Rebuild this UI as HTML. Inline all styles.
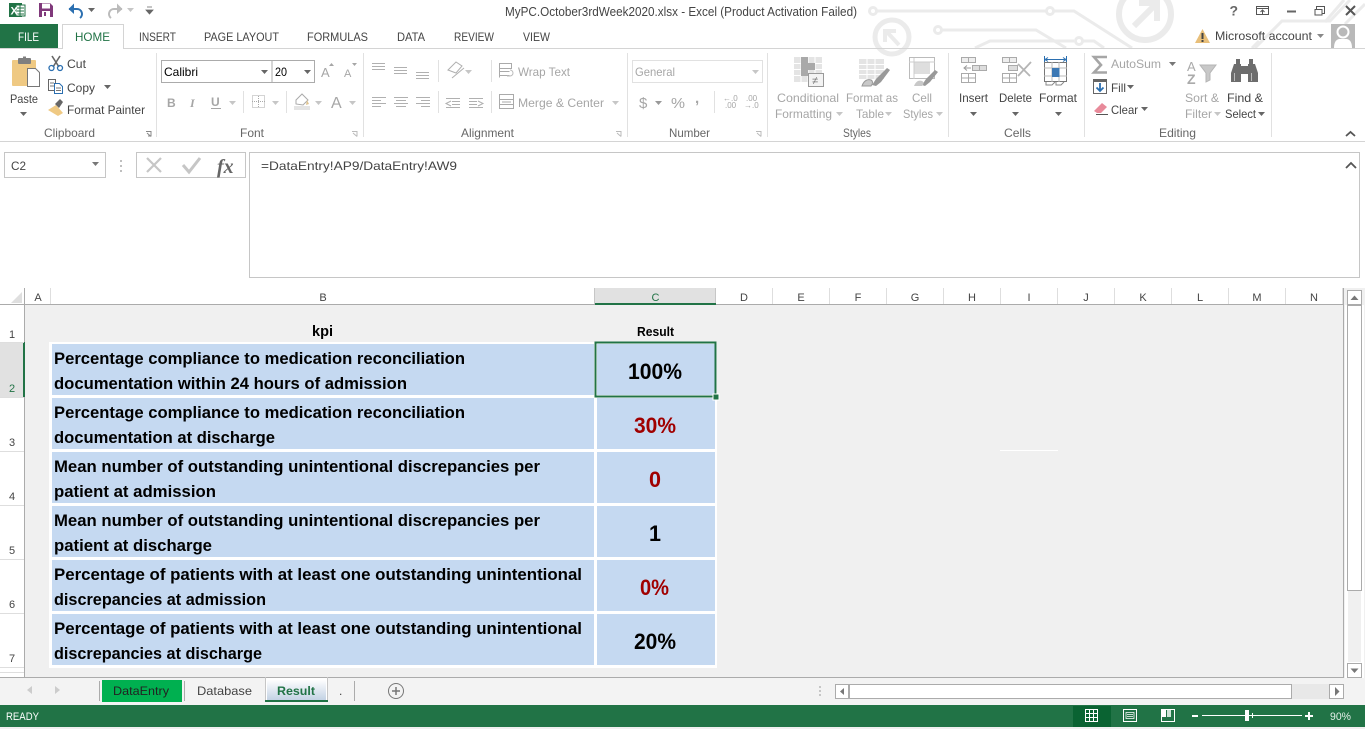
<!DOCTYPE html>
<html><head><meta charset="utf-8"><title>Excel</title>
<style>
html,body{margin:0;padding:0;background:#fff;overflow:hidden;width:1365px;height:729px}
svg{display:block}
text{font-family:"Liberation Sans",sans-serif;font-size:12px;fill:#444;white-space:pre}
.d text,text.d{fill:#a6a6a6}
.g{font-size:12px;fill:#666}
.h{font-size:11px;fill:#444}
.b{font-weight:bold;font-size:17px;fill:#000}
.v{font-weight:bold;font-size:22px;fill:#000}
.r{fill:#a00000}
</style></head><body>
<svg width="1365" height="729" viewBox="0 0 1365 729" xmlns="http://www.w3.org/2000/svg">
<defs>
<path id="car" d="M0 0h7l-3.500 4z"/>
<linearGradient id="tabg" x1="0" y1="0" x2="0" y2="1"><stop offset="0" stop-color="#fdfdfe"/><stop offset="1" stop-color="#c3d2e4"/></linearGradient>
</defs>
<rect width="1365" height="729" fill="#fff"/>

<!-- title bar circuit bg -->
<g fill="none" stroke="#ebebeb" stroke-width="3">
<circle cx="873" cy="11" r="3.500"/><path d="M877 11H1046"/><circle cx="1050" cy="11" r="3.500"/><path d="M1054 11H1074L1132 48"/>
<circle cx="938" cy="30" r="3.500"/><path d="M942 30H1036L1066 48"/>
<path d="M975 48L990 41H1074"/><circle cx="1079" cy="41" r="3.500"/><path d="M1083 41H1094L1104 48"/>
<circle cx="892" cy="37" r="17" stroke-width="5"/><path d="M887 32L899 45M885 42V31H896" stroke-width="4"/>
<circle cx="1145" cy="14" r="26" stroke-width="6"/><path d="M1134 26L1155 5M1139 3H1157V21" stroke-width="6"/>
<path d="M1252 48L1259 41"/><path d="M1255 48L1282 21H1330L1350 0"/><path d="M1325 22L1344 0"/><path d="M1345 24L1365 4"/>
</g>

<!-- Quick access -->
<rect x="9" y="3" width="13" height="14" fill="#217346"/><rect x="16" y="5" width="9" height="11" fill="#fff" stroke="#217346"/>
<path d="M17 8h7M17 11h7M17 14h7M20 5v11" stroke="#217346" stroke-width="1"/>
<text x="10.500" y="14.500" style="font-size:11px;font-weight:bold;fill:#fff">X</text>
<path d="M39 3h11l3 3v11H39z" fill="#80397b"/><rect x="42" y="3.500" width="8" height="5" fill="#fff"/><rect x="42" y="11" width="8" height="6" fill="#fff"/><rect x="44" y="12" width="2" height="4" fill="#80397b"/>
<path d="M69 9h8a5 5 0 0 1 3 9" fill="none" stroke="#2b6fb0" stroke-width="2"/><path d="M74 3.500l-5.500 5.500 5.500 5z" fill="#2b6fb0"/>
<use href="#car" x="88" y="8" fill="#666"/>
<path d="M122 9h-8a5 5 0 0 0-3 9" fill="none" stroke="#bbb" stroke-width="2"/><path d="M117 3.500l5.500 5.500-5.500 5z" fill="#bbb"/>
<use href="#car" x="127" y="8" fill="#c6c6c6"/>
<path d="M147 7h5M146 10h7l-3.500 4z" stroke="#666" fill="#666" stroke-width=".8"/>

<text x="505" y="16" textLength="352" lengthAdjust="spacingAndGlyphs" style="font-size:12.500px">MyPC.October3rdWeek2020.xlsx - Excel (Product Activation Failed)</text>

<!-- window controls -->
<text x="1229.500" y="15.500" style="font-size:14px;font-weight:bold;fill:#666">?</text>
<rect x="1256.500" y="6.500" width="12" height="8" fill="none" stroke="#555"/><path d="M1257 8.500h11M1262.500 14V10M1260.500 12l2-2 2 2" fill="none" stroke="#555"/>
<rect x="1287" y="10.500" width="9" height="2" fill="#666"/>
<path d="M1316.500 9.500v-3h8v7h-3M1316 9.500h6v5.500h-7v-5.500z" fill="none" stroke="#555"/>
<path d="M1346 6l9 9M1355 6l-9 9" stroke="#555" stroke-width="2"/>

<!-- tabs -->
<rect x="0" y="24" width="58" height="24" fill="#217346"/>
<text x="18" y="41" textLength="21" lengthAdjust="spacingAndGlyphs" style="fill:#fff">FILE</text>
<path d="M0 48.500H62.500V24.500H123.500V48.500H1365" fill="#fff" stroke="#d4d4d4"/>
<text x="75" y="41" textLength="35" lengthAdjust="spacingAndGlyphs" style="fill:#217346">HOME</text>
<text x="139" y="41" textLength="37" lengthAdjust="spacingAndGlyphs">INSERT</text>
<text x="204" y="41" textLength="75" lengthAdjust="spacingAndGlyphs">PAGE LAYOUT</text>
<text x="307" y="41" textLength="61" lengthAdjust="spacingAndGlyphs">FORMULAS</text>
<text x="397" y="41" textLength="28" lengthAdjust="spacingAndGlyphs">DATA</text>
<text x="454" y="41" textLength="40" lengthAdjust="spacingAndGlyphs">REVIEW</text>
<text x="523" y="41" textLength="27" lengthAdjust="spacingAndGlyphs">VIEW</text>

<path d="M1195 43l7.500-14 7.500 14z" fill="#e8bf7a"/><rect x="1201.500" y="33" width="2" height="6" fill="#444"/><rect x="1201.500" y="40" width="2" height="2" fill="#444"/>
<text x="1215" y="40" textLength="97" lengthAdjust="spacingAndGlyphs">Microsoft account</text>
<use href="#car" x="1317" y="34" fill="#888"/>
<rect x="1331" y="24" width="24" height="24" fill="#b9b9b9"/><circle cx="1343" cy="32" r="5.500" fill="none" stroke="#fff" stroke-width="2"/><path d="M1334 48c0-8 4-9 6-9h6c2 0 6 1 6 9z" fill="#fff"/>

<!-- ribbon bottom + separators -->
<rect x="0" y="141" width="1365" height="1" fill="#d4d4d4"/>
<g fill="#e1e1e1">
<rect x="156" y="53" width="1" height="84"/><rect x="363" y="53" width="1" height="84"/><rect x="627" y="53" width="1" height="84"/><rect x="767" y="53" width="1" height="84"/><rect x="948" y="53" width="1" height="84"/><rect x="1084" y="53" width="1" height="84"/><rect x="1271" y="53" width="1" height="84"/>
<rect x="243" y="91" width="1" height="22"/><rect x="286" y="91" width="1" height="22"/><rect x="438" y="60" width="1" height="22"/><rect x="438" y="91" width="1" height="22"/><rect x="491" y="60" width="1" height="22"/><rect x="491" y="91" width="1" height="22"/><rect x="714" y="91" width="1" height="22"/>
</g>

<!-- Clipboard -->
<rect x="12" y="60" width="24" height="26" rx="1" fill="#efc983"/><rect x="18" y="58" width="13" height="6" rx="1" fill="#7f7f7f"/><rect x="23" y="56.500" width="3" height="3" fill="#7f7f7f"/>
<path d="M27.500 68.500h8l4 4v14h-12z" fill="#fff" stroke="#777"/>
<text x="10" y="103" textLength="28" lengthAdjust="spacingAndGlyphs">Paste</text>
<use href="#car" x="20" y="112" fill="#666"/>
<path d="M52 56l7 11M60 56l-7 11" stroke="#666" stroke-width="1.600"/><circle cx="51.500" cy="68" r="2.500" fill="none" stroke="#2b6fb0" stroke-width="1.300"/><circle cx="60" cy="68" r="2.500" fill="none" stroke="#2b6fb0" stroke-width="1.300"/>
<text x="67" y="68" textLength="19" lengthAdjust="spacingAndGlyphs">Cut</text>
<path d="M48.500 79.500h7v11h-7z" fill="#fff" stroke="#666"/><path d="M54.500 83.500h5l3 3v7h-8z" fill="#fff" stroke="#2b6fb0"/><path d="M56 88h5M56 90.500h5M50 83h4M50 86h4" stroke="#777"/>
<text x="67" y="92" textLength="28" lengthAdjust="spacingAndGlyphs">Copy</text>
<use href="#car" x="104" y="85" fill="#666"/>
<path d="M48 110l8-5 7 8-5 3z" fill="#efc983"/><path d="M55 104l5-5 3 3-4 6z" fill="#666"/>
<text x="67" y="114" textLength="78" lengthAdjust="spacingAndGlyphs">Format Painter</text>
<text x="44" y="137" class="g" textLength="51" lengthAdjust="spacingAndGlyphs">Clipboard</text>
<path d="M146 131.500h5v5M147 133l4 3.500M148 136h3" fill="none" stroke="#888"/>

<!-- Font -->
<rect x="161.500" y="60.500" width="153" height="22" fill="#fff" stroke="#ababab"/><path d="M272 60v23" stroke="#ababab"/>
<text x="164" y="76" textLength="34" lengthAdjust="spacingAndGlyphs" style="fill:#000">Calibri</text>
<use href="#car" x="261" y="70" fill="#666"/>
<text x="275" y="76" textLength="12" lengthAdjust="spacingAndGlyphs" style="fill:#000">20</text>
<use href="#car" x="304" y="70" fill="#666"/>
<g class="d">
<text x="321" y="77" style="font-size:13px">A</text><path d="M329 66l2.500-3 2.500 3z" fill="#a6a6a6"/>
<text x="344" y="77" style="font-size:11px">A</text><path d="M352 63l2.500 3 2.500-3z" fill="#a6a6a6"/>
<text x="167" y="107" style="font-size:12px;font-weight:bold">B</text>
<text x="190" y="107" style="font-size:12px;font-style:italic;font-family:'Liberation Serif',serif;font-weight:bold">I</text>
<text x="211" y="106" style="font-size:12px;font-weight:bold">U</text><rect x="211" y="108" width="10" height="1" fill="#a6a6a6"/>
</g>
<use href="#car" x="229" y="101" fill="#c6c6c6"/>
<rect x="252.500" y="95.500" width="12" height="12" fill="none" stroke="#aaa" stroke-dasharray="1 1"/><path d="M258.500 96v12M252 101.500h13" stroke="#aaa" stroke-dasharray="1 1"/>
<use href="#car" x="272" y="101" fill="#c6c6c6"/>
<path d="M296 100l6-6 6 6-5 5-7-1z" fill="#fff" stroke="#aaa"/><path d="M307 100l2 4-3 1z" fill="#e0c48f"/><rect x="294" y="106" width="16" height="4" fill="#e4e4e4"/>
<use href="#car" x="315" y="101" fill="#c6c6c6"/>
<text x="331" y="108" style="font-size:16px;fill:#a6a6a6">A</text>
<use href="#car" x="349" y="101" fill="#c6c6c6"/>
<text x="240" y="137" class="g" textLength="24" lengthAdjust="spacingAndGlyphs">Font</text>
<path d="M352 131.500h5v5M353 133l4 3.500" fill="none" stroke="#bbb"/>

<!-- Alignment -->
<g stroke="#b0b0b0" fill="none">
<path d="M372 63.500h13M372 66.500h13M372 69.500h13"/>
<path d="M394 67.500h13M394 70.500h13M394 73.500h13"/>
<path d="M416 72.500h13M416 75.500h13M416 78.500h13"/>
<path d="M372 97.500h14M372 100.500h9M372 103.500h14M372 106.500h9"/>
<path d="M394 97.500h14M396 100.500h10M394 103.500h14M396 106.500h10"/>
<path d="M416 97.500h14M421 100.500h9M416 103.500h14M421 106.500h9"/>
<path d="M446 98.500h14M452 101.500h8M452 104.500h8M446 107.500h14M451 101l-5 2.500 5 2.500"/>
<path d="M469 98.500h14M469 101.500h8M469 104.500h8M469 107.500h14M478 101l5 2.500-5 2.500"/>
<path d="M448 70l8-8 6 4-6 7zM452 78l12-10"/>
</g>
<use href="#car" x="465" y="70" fill="#c6c6c6"/>
<path d="M499.500 63.500h12v5h-12zM499.500 71.500h10M499.500 75.500h10M499.500 68.500v9" fill="none" stroke="#aaa"/><path d="M510 70a3 3 0 0 1 0 6h-3" fill="none" stroke="#bbb"/>
<text x="518" y="76" class="d" textLength="52" lengthAdjust="spacingAndGlyphs">Wrap Text</text>
<rect x="499.500" y="94.500" width="14" height="14" fill="#fff" stroke="#aaa"/><path d="M500 99.500h13M500 104.500h13M502 102h9" stroke="#aaa"/>
<text x="518" y="107" class="d" textLength="86" lengthAdjust="spacingAndGlyphs">Merge &amp; Center</text>
<use href="#car" x="612" y="101" fill="#c6c6c6"/>
<text x="461" y="137" class="g" textLength="53" lengthAdjust="spacingAndGlyphs">Alignment</text>
<path d="M616 131.500h5v5M617 133l4 3.500" fill="none" stroke="#bbb"/>

<!-- Number -->
<rect x="632.500" y="60.500" width="130" height="22" fill="#fff" stroke="#e1e1e1"/>
<text x="635" y="76" class="d" textLength="40" lengthAdjust="spacingAndGlyphs">General</text>
<use href="#car" x="752" y="70" fill="#c6c6c6"/>
<text x="639" y="108" style="font-size:15px;fill:#a6a6a6">$</text>
<use href="#car" x="655" y="101" fill="#999"/>
<text x="671" y="108" style="font-size:15px;fill:#a6a6a6" textLength="14" lengthAdjust="spacingAndGlyphs">%</text>
<text x="695" y="103" style="font-size:15px;font-weight:bold;fill:#a6a6a6">,</text>
<text x="723" y="101" style="font-size:8px;fill:#a6a6a6">←.0</text><text x="725" y="108" style="font-size:8px;fill:#a6a6a6">.00</text>
<text x="746" y="101" style="font-size:8px;fill:#a6a6a6">.00</text><text x="744" y="108" style="font-size:8px;fill:#a6a6a6">→.0</text>
<text x="669" y="137" class="g" textLength="41" lengthAdjust="spacingAndGlyphs">Number</text>
<path d="M756 131.500h5v5M757 133l4 3.500" fill="none" stroke="#bbb"/>

<!-- Styles -->
<rect x="794" y="57" width="28" height="25" fill="#e4e4e4"/><path d="M794 63.500h28M794 69.500h28M794 75.500h28M801 57v25M808 57v25M815 57v25" stroke="#fff"/><path d="M801 57h7v6h7v7h-7v6h-7z" fill="#a9a9a9"/>
<rect x="808.500" y="73.500" width="15" height="13" fill="#f3f3f3" stroke="#999"/><text x="812" y="84" style="font-size:11px;fill:#777">≠</text>
<text x="777" y="102" class="d" textLength="62" lengthAdjust="spacingAndGlyphs">Conditional</text>
<text x="775" y="118" class="d" textLength="57" lengthAdjust="spacingAndGlyphs">Formatting</text><use href="#car" x="836" y="112" fill="#c6c6c6"/>
<rect x="859" y="59" width="25" height="20" fill="#e4e4e4"/><path d="M859 64.500h25M859 69.500h25M859 74.500h25M867 59v20M875 59v20" stroke="#fff"/><path d="M872 85l4-6 11-11 3 2-9 12-5 4z" fill="#999"/><path d="M862 86c2-6 6-7 9-6 2 1 2 4 0 6z" fill="#c8c8c8" stroke="#999"/>
<text x="846" y="102" class="d" textLength="52" lengthAdjust="spacingAndGlyphs">Format as</text>
<text x="856" y="118" class="d" textLength="28" lengthAdjust="spacingAndGlyphs">Table</text><use href="#car" x="885" y="112" fill="#c6c6c6"/>
<rect x="909.500" y="57.500" width="25" height="21" fill="#fff" stroke="#bbb"/><rect x="914" y="62" width="16" height="12" fill="#dedede"/><path d="M909 62h26M914 58v21" stroke="#ccc"/><path d="M922 85l4-6 9-9 3 2-8 10-5 4z" fill="#999"/><path d="M914 86c2-5 5-6 8-5 2 1 2 3 0 5z" fill="#c8c8c8"/>
<text x="912" y="102" class="d" textLength="20" lengthAdjust="spacingAndGlyphs">Cell</text>
<text x="903" y="118" class="d" textLength="30" lengthAdjust="spacingAndGlyphs">Styles</text><use href="#car" x="936" y="112" fill="#c6c6c6"/>
<text x="843" y="137" class="g" textLength="28" lengthAdjust="spacingAndGlyphs">Styles</text>

<!-- Cells -->
<g fill="#fff" stroke="#aaa">
<rect x="961.500" y="57.500" width="14" height="5" fill="#eee"/><path d="M968.500 57v5"/>
<rect x="972.500" y="65.500" width="14" height="5" fill="#ddd"/><path d="M979.500 65v5"/>
<rect x="961.500" y="73.500" width="14" height="9"/><path d="M961 78h15M968.500 73v9"/>
<rect x="1002.500" y="57.500" width="14" height="5" fill="#eee"/><path d="M1009.500 57v5"/>
<rect x="1008.500" y="65.500" width="9" height="5" fill="#ddd"/>
<rect x="1002.500" y="73.500" width="14" height="9"/><path d="M1002 78h15M1009.500 73v9"/>
</g>
<path d="M971 68h-6M967 65.500l-3 2.500 3 2.500" fill="none" stroke="#999"/>
<path d="M1018 64l12 12M1031 62l-13 14" stroke="#b5b5b5" stroke-width="1.800"/>
<path d="M1044.500 56v7M1066.500 56v7M1046 59.500h19M1048 57.500l-3 2 3 2M1063 57.500l3 2-3 2" fill="none" stroke="#2b6fb0"/>
<rect x="1044.500" y="62.500" width="22" height="19" fill="#fff" stroke="#777"/><path d="M1044 68h23M1044 76h23M1052 62v20M1059 62v20" stroke="#bbb"/><rect x="1052" y="68" width="7.500" height="9" fill="#3c78b4"/>
<path d="M1046 82v3h6l3-3M1056 82v3h5l3-3" fill="none" stroke="#888"/>
<text x="959" y="102" textLength="29" lengthAdjust="spacingAndGlyphs">Insert</text><use href="#car" x="970" y="112" fill="#666"/>
<text x="999" y="102" textLength="33" lengthAdjust="spacingAndGlyphs">Delete</text><use href="#car" x="1012" y="112" fill="#666"/>
<text x="1039" y="102" textLength="38" lengthAdjust="spacingAndGlyphs">Format</text><use href="#car" x="1055" y="112" fill="#666"/>
<text x="1004" y="137" class="g" textLength="27" lengthAdjust="spacingAndGlyphs">Cells</text>

<!-- Editing -->
<path d="M1107 57H1094L1101 65L1094 72.500H1107" fill="none" stroke="#a6a6a6" stroke-width="2.600"/>
<text x="1111" y="68" class="d" textLength="50" lengthAdjust="spacingAndGlyphs">AutoSum</text><use href="#car" x="1169" y="62" fill="#777"/>
<rect x="1093.500" y="79.500" width="13" height="14" fill="#fff" stroke="#666"/><rect x="1093" y="79" width="14" height="3" fill="#666"/><path d="M1100 83v8M1096.500 87.500l3.500 3.500 3.500-3.500" fill="none" stroke="#2b6fb0" stroke-width="1.800"/>
<text x="1111" y="92" textLength="15" lengthAdjust="spacingAndGlyphs">Fill</text><use href="#car" x="1127" y="85" fill="#666"/>
<path d="M1094 111l8-8 5 4-6 6h-4z" fill="#e88a9a"/><rect x="1096" y="114" width="12" height="1" fill="#555"/>
<text x="1111" y="114" textLength="27" lengthAdjust="spacingAndGlyphs">Clear</text><use href="#car" x="1141" y="107" fill="#666"/>
<text x="1187" y="71" style="font-size:13px;fill:#aaa">A</text><text x="1187" y="84" style="font-size:14px;font-weight:bold;fill:#aaa">Z</text>
<path d="M1200 65h16l-6 8v7l-4 2v-9z" fill="#c8c8c8" stroke="#b5b5b5"/>
<text x="1185" y="102" class="d" textLength="34" lengthAdjust="spacingAndGlyphs">Sort &amp;</text>
<text x="1185" y="118" class="d" textLength="27" lengthAdjust="spacingAndGlyphs">Filter</text><use href="#car" x="1214" y="112" fill="#c6c6c6"/>
<path d="M1236 59h4v5h1v18h-10v-9l3-9h2zM1249 59h4v5h2l3 9v9h-10V64h1z" fill="#6d6d6d"/><rect x="1241" y="66" width="7" height="8" fill="#6d6d6d"/><path d="M1234.500 73v8M1251.500 73v8" stroke="#bbb"/>
<text x="1227" y="102" textLength="36" lengthAdjust="spacingAndGlyphs">Find &amp;</text>
<text x="1225" y="118" textLength="31" lengthAdjust="spacingAndGlyphs">Select</text><use href="#car" x="1258" y="112" fill="#666"/>
<text x="1159" y="137" class="g" textLength="37" lengthAdjust="spacingAndGlyphs">Editing</text>
<path d="M1346 136l4.500-4 4.500 4" fill="none" stroke="#555" stroke-width="1.800"/>

<!-- Formula bar -->
<rect x="4.500" y="152.500" width="101" height="25" fill="#fff" stroke="#c6c6c6"/>
<text x="11" y="170" textLength="15" lengthAdjust="spacingAndGlyphs">C2</text>
<use href="#car" x="92" y="162" fill="#777"/>
<path d="M121 160v2M121 165v2M121 170v2" stroke="#aaa" stroke-width="1.500"/>
<rect x="136.500" y="152.500" width="109" height="25" fill="#fff" stroke="#c6c6c6"/>
<path d="M147 158l14 14M161 158l-14 14" stroke="#c6c6c6" stroke-width="2.200"/>
<path d="M183 165l6 7 11-14" fill="none" stroke="#c6c6c6" stroke-width="3"/>
<text x="217" y="173" style="font-family:'Liberation Serif',serif;font-style:italic;font-weight:bold;font-size:20px;fill:#666">fx</text>
<rect x="249.500" y="152.500" width="1110" height="125" fill="#fff" stroke="#c6c6c6"/>
<text x="261" y="170" textLength="196" lengthAdjust="spacingAndGlyphs">=DataEntry!AP9/DataEntry!AW9</text>
<path d="M1346 168l5-5 5 5" fill="none" stroke="#555" stroke-width="1.800"/>

<!-- Sheet -->
<rect x="25" y="305" width="1318" height="372" fill="#f0f0f0"/>
<rect x="0" y="304" width="1343" height="1" fill="#ababab"/>
<rect x="24" y="288" width="1" height="390" fill="#ababab"/>
<rect x="1343" y="288" width="1" height="390" fill="#ababab"/>
<path d="M11 303L22 292V303z" fill="#dfdfdf"/>

<!-- col headers -->
<rect x="595" y="288" width="121" height="16" fill="#e1e1e1"/>
<rect x="595" y="303" width="121" height="2" fill="#217346"/>
<g fill="#dedede">
<rect x="50" y="288" width="1" height="16"/><rect x="594" y="288" width="1" height="16" fill="#c6c6c6"/><rect x="715" y="288" width="1" height="15" fill="#c6c6c6"/><rect x="772" y="288" width="1" height="16"/><rect x="829" y="288" width="1" height="16"/><rect x="886" y="288" width="1" height="16"/><rect x="943" y="288" width="1" height="16"/><rect x="1000" y="288" width="1" height="16"/><rect x="1057" y="288" width="1" height="16"/><rect x="1114" y="288" width="1" height="16"/><rect x="1171" y="288" width="1" height="16"/><rect x="1228" y="288" width="1" height="16"/><rect x="1285" y="288" width="1" height="16"/><rect x="1342" y="288" width="1" height="16"/>
</g>
<text class="h" x="38" y="301" text-anchor="middle">A</text>
<text class="h" x="323" y="301" text-anchor="middle">B</text>
<text class="h" x="655.500" y="301" text-anchor="middle" style="fill:#217346">C</text>
<text class="h" x="744" y="301" text-anchor="middle">D</text>
<text class="h" x="801" y="301" text-anchor="middle">E</text>
<text class="h" x="858" y="301" text-anchor="middle">F</text>
<text class="h" x="915" y="301" text-anchor="middle">G</text>
<text class="h" x="972" y="301" text-anchor="middle">H</text>
<text class="h" x="1029" y="301" text-anchor="middle">I</text>
<text class="h" x="1086" y="301" text-anchor="middle">J</text>
<text class="h" x="1143" y="301" text-anchor="middle">K</text>
<text class="h" x="1200" y="301" text-anchor="middle">L</text>
<text class="h" x="1257" y="301" text-anchor="middle">M</text>
<text class="h" x="1314" y="301" text-anchor="middle">N</text>

<!-- row headers -->
<rect x="0" y="343" width="24" height="54" fill="#e1e1e1"/>
<rect x="23" y="342" width="2" height="55" fill="#217346"/>
<g fill="#dedede">
<rect x="0" y="342" width="24" height="1"/><rect x="0" y="397" width="24" height="1"/><rect x="0" y="451" width="24" height="1"/><rect x="0" y="505" width="24" height="1"/><rect x="0" y="559" width="24" height="1"/><rect x="0" y="613" width="24" height="1"/><rect x="0" y="667" width="24" height="1"/><rect x="0" y="672" width="24" height="1"/>
</g>
<text class="h" x="12" y="338" text-anchor="middle">1</text>
<text class="h" x="12" y="392" text-anchor="middle" style="fill:#217346">2</text>
<text class="h" x="12" y="446" text-anchor="middle">3</text>
<text class="h" x="12" y="500" text-anchor="middle">4</text>
<text class="h" x="12" y="554" text-anchor="middle">5</text>
<text class="h" x="12" y="608" text-anchor="middle">6</text>
<text class="h" x="12" y="662" text-anchor="middle">7</text>

<!-- table -->
<rect x="49" y="342" width="668" height="326" fill="#fff"/>
<g fill="#c5d9f1">
<rect x="52" y="344" width="542" height="51"/><rect x="597" y="344" width="118" height="51"/>
<rect x="52" y="398" width="542" height="51"/><rect x="597" y="398" width="118" height="51"/>
<rect x="52" y="452" width="542" height="51"/><rect x="597" y="452" width="118" height="51"/>
<rect x="52" y="506" width="542" height="51"/><rect x="597" y="506" width="118" height="51"/>
<rect x="52" y="560" width="542" height="51"/><rect x="597" y="560" width="118" height="51"/>
<rect x="52" y="614" width="542" height="51"/><rect x="597" y="614" width="118" height="51"/>
</g>
<rect x="595.500" y="342.500" width="120" height="54" fill="none" stroke="#217346" stroke-width="2"/>
<rect x="713" y="394" width="6" height="6" fill="#217346" stroke="#fff" stroke-width="1"/>

<text x="312" y="336" style="font-weight:bold;font-size:15px;fill:#000" textLength="21" lengthAdjust="spacingAndGlyphs">kpi</text>
<text x="637" y="336" style="font-weight:bold;font-size:12.500px;fill:#000" textLength="37" lengthAdjust="spacingAndGlyphs">Result</text>

<text class="b" x="54" y="364" textLength="411" lengthAdjust="spacingAndGlyphs">Percentage compliance to medication reconciliation</text>
<text class="b" x="54" y="389" textLength="353" lengthAdjust="spacingAndGlyphs">documentation within 24 hours of admission</text>
<text class="b" x="54" y="418" textLength="411" lengthAdjust="spacingAndGlyphs">Percentage compliance to medication reconciliation</text>
<text class="b" x="54" y="443" textLength="221" lengthAdjust="spacingAndGlyphs">documentation at discharge</text>
<text class="b" x="54" y="472" textLength="486" lengthAdjust="spacingAndGlyphs">Mean number of outstanding unintentional discrepancies per</text>
<text class="b" x="54" y="497" textLength="162" lengthAdjust="spacingAndGlyphs">patient at admission</text>
<text class="b" x="54" y="526" textLength="486" lengthAdjust="spacingAndGlyphs">Mean number of outstanding unintentional discrepancies per</text>
<text class="b" x="54" y="551" textLength="158" lengthAdjust="spacingAndGlyphs">patient at discharge</text>
<text class="b" x="54" y="580" textLength="528" lengthAdjust="spacingAndGlyphs">Percentage of patients with at least one outstanding unintentional</text>
<text class="b" x="54" y="605" textLength="212" lengthAdjust="spacingAndGlyphs">discrepancies at admission</text>
<text class="b" x="54" y="634" textLength="528" lengthAdjust="spacingAndGlyphs">Percentage of patients with at least one outstanding unintentional</text>
<text class="b" x="54" y="659" textLength="208" lengthAdjust="spacingAndGlyphs">discrepancies at discharge</text>

<text class="v" x="628" y="379" textLength="54" lengthAdjust="spacingAndGlyphs">100%</text>
<text class="v r" x="634" y="433" textLength="42" lengthAdjust="spacingAndGlyphs">30%</text>
<text class="v r" x="649" y="487" textLength="12" lengthAdjust="spacingAndGlyphs">0</text>
<text class="v" x="649" y="541" textLength="12" lengthAdjust="spacingAndGlyphs">1</text>
<text class="v r" x="640" y="595" textLength="29" lengthAdjust="spacingAndGlyphs">0%</text>
<text class="v" x="634" y="649" textLength="42" lengthAdjust="spacingAndGlyphs">20%</text>

<rect x="1000" y="450" width="58" height="1" fill="#fff"/>

<!-- V scrollbar -->
<rect x="1344" y="288" width="21" height="390" fill="#f0f0f0"/>
<rect x="1345" y="305" width="19" height="373" fill="#fff"/>
<rect x="1347.500" y="290.500" width="14" height="14" fill="#fff" stroke="#ababab"/>
<path d="M1350.500 300l4-4.500 4 4.500z" fill="#777"/>
<rect x="1347.500" y="305.500" width="14" height="285" fill="#fff" stroke="#ababab"/>
<rect x="1348" y="591" width="13" height="71" fill="#f0f0f0"/>
<rect x="1347.500" y="663.500" width="14" height="14" fill="#fff" stroke="#ababab"/>
<path d="M1350.500 668.500l4 4.500 4-4.500z" fill="#777"/>

<!-- sheet tabs row -->
<rect x="0" y="678" width="1365" height="27" fill="#f3f3f3"/>
<rect x="0" y="677" width="1344" height="1" fill="#ababab"/>
<path d="M32 686l-5 4 5 4zM55 686l5 4-5 4z" fill="#ccc"/>
<rect x="99" y="681" width="1" height="20" fill="#ababab"/>
<rect x="102" y="680" width="80" height="22" fill="#00b050"/>
<text x="113" y="695" textLength="56" lengthAdjust="spacingAndGlyphs" style="fill:#222">DataEntry</text>
<rect x="184" y="681" width="1" height="20" fill="#ababab"/>
<text x="197" y="695" textLength="55" lengthAdjust="spacingAndGlyphs">Database</text>
<rect x="265" y="678" width="63" height="23" fill="#fff"/>
<path d="M265.500 702V677M327.500 702V677" stroke="#c6c6c6"/>
<rect x="267" y="680" width="59" height="20" fill="url(#tabg)"/>
<rect x="265" y="700" width="63" height="2" fill="#217346"/>
<text x="277" y="695" textLength="38" lengthAdjust="spacingAndGlyphs" style="font-weight:bold;fill:#217346">Result</text>
<text x="339" y="695" style="fill:#444">.</text>
<rect x="354" y="681" width="1" height="20" fill="#ababab"/>
<circle cx="396" cy="691" r="7.500" fill="none" stroke="#777"/><path d="M396 687v8M392 691h8" stroke="#777" stroke-width="1.500"/>
<path d="M820 686v2M820 690v2M820 694v2" stroke="#999"/>

<!-- H scrollbar -->
<rect x="835" y="684" width="509" height="15" fill="#e8e8e8"/>
<rect x="835.500" y="684.500" width="13" height="14" fill="#fff" stroke="#ababab"/>
<path d="M844 688v7l-4-3.500z" fill="#777"/>
<rect x="849.500" y="684.500" width="442" height="14" fill="#fff" stroke="#ababab"/>
<rect x="1329.500" y="684.500" width="14" height="14" fill="#fff" stroke="#ababab"/>
<path d="M1335 687v9l4.500-4.500z" fill="#777"/>

<!-- Status bar -->
<rect x="0" y="705" width="1365" height="22" fill="#217346"/>
<rect x="0" y="727" width="1365" height="2" fill="#f0f0f0"/>
<text x="6" y="720" textLength="33" lengthAdjust="spacingAndGlyphs" style="font-size:11px;fill:#fff">READY</text>
<rect x="1073" y="706" width="38" height="21" fill="#0a6332"/>
<path d="M1085.500 709.500h12v12h-12zM1089.500 709v13M1093.500 709v13M1085 713.500h13M1085 717.500h13" fill="none" stroke="#fff"/>
<path d="M1123.500 709.500h13v12h-13z" fill="none" stroke="#fff"/><path d="M1126 712.500h8v6h-8zM1127 714.500h6M1127 716.500h6" fill="none" stroke="#fff" stroke-width=".8"/>
<path d="M1161.500 709.500h13v12h-13z" fill="none" stroke="#fff"/><rect x="1162" y="710" width="4" height="7" fill="#fff"/><rect x="1166" y="710" width="1" height="11" fill="#217346"/><rect x="1167" y="710" width="4" height="7" fill="#cde3d6"/>
<rect x="1192" y="715" width="6" height="2" fill="#fff"/>
<rect x="1202" y="715" width="100" height="1" fill="#fff"/>
<rect x="1245" y="710" width="4" height="11" fill="#fff"/><rect x="1252" y="713" width="1" height="5" fill="#fff"/>
<path d="M1305 716h8M1309 712v8" stroke="#fff" stroke-width="2"/>
<text x="1330" y="720" textLength="21" lengthAdjust="spacingAndGlyphs" style="font-size:11px;fill:#e3efe8">90%</text>
</svg>
</body></html>
